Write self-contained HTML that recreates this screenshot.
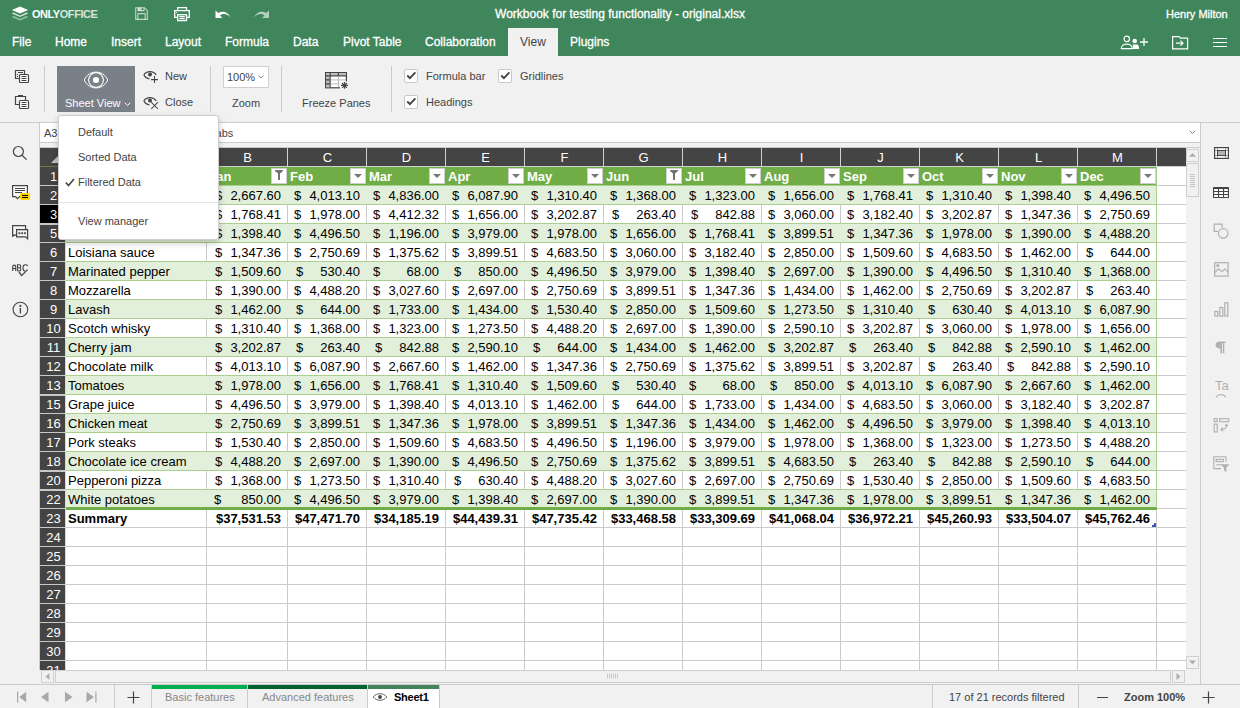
<!DOCTYPE html><html><head><meta charset="utf-8"><style>
*{box-sizing:border-box;margin:0;padding:0}
html,body{width:1240px;height:708px;overflow:hidden;background:#f1f1f1;font-family:"Liberation Sans", sans-serif;position:relative}
div,span{position:absolute;white-space:nowrap}
svg{position:absolute;overflow:visible}
.t{font-size:12px;color:#fff;top:35px;line-height:14px;-webkit-text-stroke:0.3px currentColor}
.hb{-webkit-text-stroke:0.3px currentColor}
.l{font-size:11px;color:#444444;line-height:13px}
.c{font-size:13px;color:#000;line-height:15px}
.r{text-align:right}

</style></head><body>
<div style="left:0;top:0;width:1240px;height:56px;background:#40865c"></div>
<svg style="left:11px;top:6px" width="18" height="15" viewBox="0 0 18 15">
<path d="M9 0.5 L17.2 4 L9 7.5 L0.8 4 Z" fill="#fff"/>
<path d="M2.5 6.6 L0.8 7.5 L9 11 L17.2 7.5 L15.5 6.6 L9 9.4 Z" fill="#fff" opacity="0.75"/>
<path d="M2.5 10.1 L0.8 11 L9 14.5 L17.2 11 L15.5 10.1 L9 12.9 Z" fill="#fff" opacity="0.5"/>
</svg>
<div style="left:32px;top:8px;font-size:11px;font-weight:bold;color:#fff;line-height:13px;letter-spacing:-0.45px">ONLY<span style="position:static;color:rgba(255,255,255,0.8)">OFFICE</span></div>
<svg style="left:130px;top:4px" width="20" height="18" viewBox="0 0 20 18" fill="none" stroke="#fff" stroke-opacity="0.65" stroke-width="1.1">
<path d="M5.7 3.7 H14.4 L17.3 6.6 V15.4 H5.7 Z"/><rect x="8" y="3.7" width="3.6" height="2.9" fill="#fff" fill-opacity="0.65" stroke="none"/><path d="M8 3.7 V6.6 H14 V3.7"/><path d="M7.9 15.4 V9.6 H15.1 V15.4"/></svg>
<svg style="left:130px;top:4px" width="64" height="20" viewBox="0 0 64 20" fill="none" stroke="#fff" stroke-width="1.3">
<path d="M47.7 6.3 V3.7 H56.5 V6.3"/><path d="M47.3 13.4 H44.7 V6.7 H59.3 V13.4 H56.8"/><rect x="47.7" y="10.7" width="8.8" height="5.9"/><path d="M49.4 12.6 H54.8 M49.4 14.6 H54.8"/><circle cx="46.6" cy="8.6" r="0.6" fill="#fff" stroke="none"/></svg>
<svg style="left:215px;top:9px" width="17" height="11" viewBox="0 0 17 11">
<path d="M0.5 1.5 L0.5 9 L7.5 9 L5 6.6 C7.5 4.5 11.5 4.2 15.5 8.5 C13 2.5 7 1.5 3.3 4 Z" fill="#fff"/></svg>
<svg style="left:253px;top:9px" width="17" height="11" viewBox="0 0 17 11">
<path d="M16 1.5 L16 9 L9 9 L11.5 6.6 C9 4.5 5 4.2 1 8.5 C3.5 2.5 9.5 1.5 13.2 4 Z" fill="#fff" opacity="0.6"/></svg>
<div class="hb" style="left:0;top:7px;width:1240px;text-align:center;font-size:12px;color:#fff;line-height:14px">Workbook for testing functionality - original.xlsx</div>
<div class="hb" style="left:1166px;top:8px;font-size:11px;color:#fff;line-height:13px">Henry Milton</div>
<div style="left:508px;top:28px;width:50px;height:28px;background:#f1f1f1"></div>
<div class="t" style="left:12px;color:#fff">File</div>
<div class="t" style="left:55px;color:#fff">Home</div>
<div class="t" style="left:111px;color:#fff">Insert</div>
<div class="t" style="left:165px;color:#fff">Layout</div>
<div class="t" style="left:225px;color:#fff">Formula</div>
<div class="t" style="left:293px;color:#fff">Data</div>
<div class="t" style="left:343px;color:#fff">Pivot Table</div>
<div class="t" style="left:425px;color:#fff">Collaboration</div>
<div class="t" style="left:520px;color:#444444;-webkit-text-stroke:0">View</div>
<div class="t" style="left:570px;color:#fff">Plugins</div>
<svg style="left:1120px;top:35px" width="30" height="15" viewBox="0 0 30 15" fill="none" stroke="#fff" stroke-width="1.2">
<circle cx="6.8" cy="3.9" r="2.7"/><path d="M1.3 13.6 C1.3 7.6 12.3 7.6 12.3 13.6 Z"/>
<circle cx="14.7" cy="6" r="2.3" fill="#fff" stroke="none"/><path d="M12.9 9.4 H16.5 C18.3 9.4 19.1 10.8 19.1 13.9 H12.9 Z" fill="#fff" stroke="none"/>
<path d="M20 7 H28 M24 3 V11" stroke-width="1.3"/></svg>
<svg style="left:1172px;top:36px" width="17" height="14" viewBox="0 0 17 14" fill="none" stroke="#fff" stroke-width="1.2">
<path d="M0.6 0.6 H7 L8.5 2.2 H15.6 V12.8 H0.6 Z"/><path d="M4 7.2 H11 M8.5 4.7 L11 7.2 L8.5 9.7"/></svg>
<svg style="left:1213px;top:37px" width="14" height="11" viewBox="0 0 14 11" stroke="#fff" stroke-width="1.2">
<path d="M0 1.5 H14 M0 5.5 H14 M0 9.5 H14"/></svg>
<div style="left:0;top:122px;width:1240px;height:1px;background:#cbcbcb"></div>
<div style="left:44px;top:66px;width:1px;height:46px;background:#cbcbcb"></div>
<div style="left:210px;top:66px;width:1px;height:46px;background:#cbcbcb"></div>
<div style="left:281px;top:66px;width:1px;height:46px;background:#cbcbcb"></div>
<div style="left:391px;top:66px;width:1px;height:46px;background:#cbcbcb"></div>
<svg style="left:14px;top:69px" width="16" height="15" viewBox="0 0 16 15" fill="none" stroke="#444" stroke-width="1.2">
<path d="M5 9.5 H1.5 V1.5 H10.5 V5"/><path d="M4 3.5 H9" stroke-width="1"/><rect x="3" y="5" width="1" height="1" fill="#444" stroke="none"/><rect x="3" y="7" width="1" height="1" fill="#444" stroke="none"/>
<rect x="5.5" y="5.5" width="9" height="8" rx="0.9" fill="#fff"/><path d="M7.5 7.5 H12.5 M7.5 9.5 H12.5 M7.5 11.5 H12.5" stroke-width="1"/></svg>
<svg style="left:14px;top:94px" width="16" height="16" viewBox="0 0 16 16" fill="none" stroke="#444" stroke-width="1.2">
<path d="M5 10.5 H1.5 V2.5 H11.5 V6"/><path d="M4 2 H9" stroke-width="2"/>
<rect x="5.5" y="6.5" width="9" height="8" rx="0.9" fill="#fff"/><path d="M7.5 8.5 H12.5 M7.5 10.5 H12.5 M7.5 12.5 H12.5" stroke-width="1"/></svg>
<div style="left:57px;top:66px;width:78px;height:46px;background:#7a8088"></div>
<svg style="left:83px;top:71px" width="26" height="18" viewBox="0 0 26 18" fill="none" stroke="#fff" stroke-width="1">
<path d="M1.2 9 C6 -1.6 20 -1.6 24.8 9 C20 19.6 6 19.6 1.2 9 Z"/><circle cx="13" cy="9" r="7.4" stroke-width="1.1"/><circle cx="13" cy="9" r="3.1" fill="#fff" stroke="none"/></svg>
<div class="l" style="left:65px;top:97px;color:#fff">Sheet View</div>
<svg style="left:124px;top:102px" width="7" height="5" viewBox="0 0 7 5" fill="none" stroke="#fff" stroke-width="1"><path d="M0.8 0.8 L3.5 3.5 L6.2 0.8"/></svg>
<svg style="left:143px;top:70px" width="16" height="14" viewBox="0 0 16 14" fill="none" stroke="#444" stroke-width="1.2">
<path d="M0.8 5 C3.5 0.5 10.5 0.5 13.2 5 M0.8 5 C2 7 4 8.6 6.5 9"/><circle cx="7" cy="4.6" r="2" fill="#444" stroke="none"/>
<path d="M8 9.6 H15 M11.5 6.1 V13.1" stroke-width="1.05"/></svg>
<div class="l" style="left:165px;top:70px">New</div>
<svg style="left:143px;top:96px" width="16" height="14" viewBox="0 0 16 14" fill="none" stroke="#444" stroke-width="1.2">
<path d="M0.8 5 C3.5 0.5 10.5 0.5 13.2 5 M0.8 5 C2 7 4 8.6 6.5 9"/><circle cx="7" cy="4.6" r="2" fill="#444" stroke="none"/>
<path d="M8.2 6.2 L15 13 M15 6.2 L8.2 13" stroke-width="1.05"/></svg>
<div class="l" style="left:165px;top:96px">Close</div>
<div style="left:223px;top:66px;width:46px;height:22px;background:#fff;border:1px solid #cfcfcf;border-radius:1px"></div>
<div class="l" style="left:227px;top:71px">100%</div>
<svg style="left:258px;top:75px" width="6" height="4" viewBox="0 0 6 4" fill="none" stroke="#777" stroke-width="0.9"><path d="M0.5 0.7 L3 3 L5.5 0.7"/></svg>
<div class="l" style="left:232px;top:97px">Zoom</div>
<svg style="left:325px;top:72px" width="24" height="18" viewBox="0 0 24 18">
<rect x="0.6" y="0.6" width="20.8" height="15.2" fill="#fff" stroke="#444" stroke-width="1.2"/>
<rect x="1.2" y="1.2" width="19.6" height="2.4" fill="#bbb"/><rect x="1.2" y="3.6" width="3.8" height="11.6" fill="#bbb"/>
<path d="M0.6 3.9 H21.4 M0.6 7.9 H5.4 M0.6 11.9 H5.4 M5.2 0.6 V15.8 M13.4 0.6 V3.9" stroke="#444" stroke-width="1.1"/>
<path d="M5.4 7.9 H21 M5.4 11.9 H14 M13.4 3.9 V15" stroke="#aaa" stroke-width="0.8"/>
<rect x="15" y="9.4" width="9" height="8" fill="#f1f1f1"/>
<path d="M19.5 10 V16.8 M16.1 13.4 H22.9 M17.1 11 L21.9 15.8 M21.9 11 L17.1 15.8" stroke="#444" stroke-width="1.1"/><circle cx="19.5" cy="13.4" r="1.7" fill="#444"/>
</svg>
<div class="l" style="left:302px;top:97px">Freeze Panes</div>
<div style="left:404px;top:69px;width:14px;height:14px;background:#fff;border:1px solid #c8c8c8;border-radius:2px"></div><svg style="left:404px;top:69px" width="14" height="14" viewBox="0 0 14 14" fill="none" stroke="#444" stroke-width="1.9"><path d="M3.3 6.5 L5.9 9.1 L11.4 3.3"/></svg>
<div class="l" style="left:426px;top:70px">Formula bar</div>
<div style="left:498px;top:69px;width:14px;height:14px;background:#fff;border:1px solid #c8c8c8;border-radius:2px"></div><svg style="left:498px;top:69px" width="14" height="14" viewBox="0 0 14 14" fill="none" stroke="#444" stroke-width="1.9"><path d="M3.3 6.5 L5.9 9.1 L11.4 3.3"/></svg>
<div class="l" style="left:520px;top:70px">Gridlines</div>
<div style="left:404px;top:95px;width:14px;height:14px;background:#fff;border:1px solid #c8c8c8;border-radius:2px"></div><svg style="left:404px;top:95px" width="14" height="14" viewBox="0 0 14 14" fill="none" stroke="#444" stroke-width="1.9"><path d="M3.3 6.5 L5.9 9.1 L11.4 3.3"/></svg>
<div class="l" style="left:426px;top:96px">Headings</div>
<div style="left:39px;top:123px;width:1px;height:547px;background:#cbcbcb"></div>
<div style="left:40px;top:123px;width:1160px;height:19px;background:#fff"></div>
<div style="left:40px;top:142px;width:1160px;height:1px;background:#cbcbcb"></div>
<div class="l" style="left:44px;top:127px">A3</div>
<div class="l" style="left:196px;top:127px">Kebabs</div>
<svg style="left:1189px;top:130px" width="7" height="5" viewBox="0 0 7 5" fill="none" stroke="#777" stroke-width="0.9"><path d="M0.8 0.8 L3.5 3.5 L6.2 0.8"/></svg>
<div style="left:40px;top:147px;width:1160px;height:1px;background:#cbcbcb"></div>
<svg style="left:12px;top:145px" width="16" height="16" viewBox="0 0 16 16" fill="none" stroke="#444" stroke-width="1.2">
<circle cx="6.4" cy="6.5" r="5"/><path d="M10 10.2 L14.6 14.6"/></svg>
<svg style="left:12px;top:185px" width="19" height="16" viewBox="0 0 19 16" fill="none" stroke="#444" stroke-width="1.2">
<path d="M0.6 0.6 H15.4 V11.6 H7.5 L5.5 13.6 L3.5 11.6 H0.6 Z" fill="#fff"/><path d="M3 3.5 H13 M3 5.5 H13 M3 7.5 H10" stroke-width="1"/>
<rect x="8" y="8" width="10" height="7" rx="1.6" fill="#ffd400" stroke="none"/><path d="M10 10.5 H16 M10 12.5 H16" stroke="#000" stroke-width="1.1"/></svg>
<svg style="left:12px;top:225px" width="17" height="15" viewBox="0 0 17 15" fill="none" stroke="#444" stroke-width="1.2">
<path d="M4 10.2 H0.6 V0.6 H13.6 V4"/><path d="M0.6 10.2 V11.2 L2.6 10"/>
<path d="M4.6 4.6 H15.6 V13.8 L13.6 11.9 H4.6 Z"/><rect x="6.5" y="7.3" width="1.8" height="1.8" fill="#444" stroke="none"/><rect x="9.3" y="7.3" width="1.8" height="1.8" fill="#444" stroke="none"/><rect x="12.1" y="7.3" width="1.8" height="1.8" fill="#444" stroke="none"/></svg>
<svg style="left:12px;top:264px" width="17" height="15" viewBox="0 0 17 15" fill="none" stroke="#444" stroke-width="1.1">
<path d="M0.7 7 V2.5 C0.7 0.6 3.7 0.6 3.7 2.5 V7 M0.7 4.5 H3.7"/>
<path d="M5.5 7 V0.8 H7.4 C9 0.8 9 3.7 7.4 3.7 H5.5 M7.4 3.7 C9.3 3.7 9.3 7 7.4 7 H5.5"/>
<path d="M15.8 1.8 C15 0.8 14 0.8 13 0.8 C11 0.8 11 2.5 11 4 C11 5.5 11 7 13 7"/>
<path d="M7 8 L9.6 11.6 L15.6 5.6" stroke-width="1.3"/></svg>
<svg style="left:12px;top:301px" width="17" height="17" viewBox="0 0 17 17" fill="none" stroke="#444" stroke-width="1.1">
<circle cx="8.4" cy="8.5" r="7.3"/><path d="M8.4 7 V12.5" stroke-width="1.3"/><circle cx="8.4" cy="4.9" r="0.5" fill="#444"/></svg>
<div style="left:1200px;top:123px;width:1px;height:562px;background:#cbcbcb"></div>
<svg style="left:1214px;top:147px" width="15" height="12" viewBox="0 0 15 12" fill="none">
<rect x="0.6" y="0.6" width="13.8" height="10.8" fill="#fff" stroke="#444" stroke-width="1.2"/>
<path d="M3.5 1 V3.5 M11.5 1 V3.5 M3.5 8.5 V11 M11.5 8.5 V11 M1 3.5 H3.5 M11.5 3.5 H14 M1 8.5 H3.5 M11.5 8.5 H14" stroke="#9a9a9a" stroke-width="1"/>
<rect x="3.5" y="3.5" width="8" height="5" fill="#b4b4b4" stroke="#444" stroke-width="1"/></svg>
<svg style="left:1213px;top:187px" width="16" height="11" viewBox="0 0 16 11">
<rect x="0" y="0" width="16" height="11" rx="0.5" fill="#444"/>
<g fill="#fff"><rect x="1" y="2" width="4" height="2" rx="0.6"/><rect x="6" y="2" width="4" height="2" rx="0.6"/><rect x="11" y="2" width="4" height="2" rx="0.6"/>
<rect x="1" y="5" width="4" height="2" rx="0.6"/><rect x="6" y="5" width="4" height="2" rx="0.6"/><rect x="11" y="5" width="4" height="2" rx="0.6"/>
<rect x="1" y="8" width="4" height="2" rx="0.6"/><rect x="6" y="8" width="4" height="2" rx="0.6"/><rect x="11" y="8" width="4" height="2" rx="0.6"/></g></svg>
<svg style="left:1213px;top:223px" width="17" height="17" viewBox="0 0 17 17" fill="none" stroke="#b0b0b0" stroke-width="1.2">
<path d="M5 8.4 H1.2 V1.2 H9 V4.5"/><circle cx="10.2" cy="10.4" r="4.7"/></svg>
<svg style="left:1214px;top:262px" width="15" height="15" viewBox="0 0 15 15" fill="none" stroke="#b0b0b0" stroke-width="1.2">
<rect x="0.7" y="0.7" width="13.4" height="13.4"/><circle cx="3.8" cy="3.6" r="1"/><path d="M0.7 10.5 L4.7 6.8 L8 9.6 L10.8 7 L14.1 10"/></svg>
<svg style="left:1214px;top:302px" width="15" height="15" viewBox="0 0 15 15" fill="none" stroke="#b0b0b0" stroke-width="1.2">
<rect x="0.8" y="9.5" width="3" height="4.6"/><rect x="5.8" y="5.5" width="3" height="8.6"/><rect x="10.8" y="0.8" width="3" height="13.3"/></svg>
<svg style="left:1215px;top:341px" width="11" height="13" viewBox="0 0 11 13"><path d="M4.5 0.5 H10.5 V2 H9.3 V12.5 H7.8 V2 H6.9 V12.5 H5.4 V7.6 H4.5 C2.3 7.6 0.6 6.1 0.6 4 C0.6 1.9 2.3 0.5 4.5 0.5 Z" fill="#b0b0b0"/></svg>
<div style="left:1215px;top:379px;font-size:13px;color:#b0b0b0;line-height:14px">Ta</div><svg style="left:1215px;top:393px" width="13" height="5" viewBox="0 0 13 5" fill="none" stroke="#b0b0b0" stroke-width="1.1"><path d="M1 4.2 C3.5 0.5 8.5 0.5 11 4.2"/></svg>
<svg style="left:1213px;top:418px" width="17" height="15" viewBox="0 0 17 15" fill="none" stroke="#b0b0b0" stroke-width="1.1">
<rect x="1.2" y="0.7" width="3" height="3"/><rect x="6.8" y="0.7" width="9" height="3"/><rect x="1.2" y="6.2" width="3" height="7.8"/>
<path d="M13.5 6.5 C13.5 10 12 11.5 8 11.5 M9.8 9.7 L8 11.5 L9.8 13.3 M12 8 L13.5 6.3 L15 8"/></svg>
<svg style="left:1213px;top:456px" width="17" height="17" viewBox="0 0 17 17" fill="none" stroke="#b0b0b0" stroke-width="1.1">
<path d="M8 12.6 H0.8 V0.8 H13 V6"/><rect x="3.2" y="3.4" width="7.2" height="2.2"/><path d="M3.2 8.8 H8.5"/>
<path d="M7.5 8.3 H16.5 L13.3 11.8 V16 L11 14.6 V11.8 Z" fill="#b0b0b0" stroke="none"/></svg>
<div style="left:40px;top:148px;width:1146px;height:522px;background:#fff"></div>
<div style="left:40px;top:148px;width:1146px;height:18px;background:#444444"></div>
<svg style="left:40px;top:148px" width="25" height="18" viewBox="0 0 25 18"><path d="M25 1 L25 15 L11 15 Z" fill="#c4c4c4"/></svg>
<div class="c" style="left:66px;top:150px;width:141px;text-align:center;color:#fff">A</div>
<div class="c" style="left:207px;top:150px;width:81px;text-align:center;color:#fff">B</div>
<div class="c" style="left:288px;top:150px;width:79px;text-align:center;color:#fff">C</div>
<div class="c" style="left:367px;top:150px;width:79px;text-align:center;color:#fff">D</div>
<div class="c" style="left:446px;top:150px;width:79px;text-align:center;color:#fff">E</div>
<div class="c" style="left:525px;top:150px;width:79px;text-align:center;color:#fff">F</div>
<div class="c" style="left:604px;top:150px;width:79px;text-align:center;color:#fff">G</div>
<div class="c" style="left:683px;top:150px;width:79px;text-align:center;color:#fff">H</div>
<div class="c" style="left:762px;top:150px;width:79px;text-align:center;color:#fff">I</div>
<div class="c" style="left:841px;top:150px;width:79px;text-align:center;color:#fff">J</div>
<div class="c" style="left:920px;top:150px;width:79px;text-align:center;color:#fff">K</div>
<div class="c" style="left:999px;top:150px;width:79px;text-align:center;color:#fff">L</div>
<div class="c" style="left:1078px;top:150px;width:79px;text-align:center;color:#fff">M</div>
<div style="left:65px;top:148px;width:1px;height:18px;background:#d0d0d0"></div>
<div style="left:206px;top:148px;width:1px;height:18px;background:#d0d0d0"></div>
<div style="left:287px;top:148px;width:1px;height:18px;background:#d0d0d0"></div>
<div style="left:366px;top:148px;width:1px;height:18px;background:#d0d0d0"></div>
<div style="left:445px;top:148px;width:1px;height:18px;background:#d0d0d0"></div>
<div style="left:524px;top:148px;width:1px;height:18px;background:#d0d0d0"></div>
<div style="left:603px;top:148px;width:1px;height:18px;background:#d0d0d0"></div>
<div style="left:682px;top:148px;width:1px;height:18px;background:#d0d0d0"></div>
<div style="left:761px;top:148px;width:1px;height:18px;background:#d0d0d0"></div>
<div style="left:840px;top:148px;width:1px;height:18px;background:#d0d0d0"></div>
<div style="left:919px;top:148px;width:1px;height:18px;background:#d0d0d0"></div>
<div style="left:998px;top:148px;width:1px;height:18px;background:#d0d0d0"></div>
<div style="left:1077px;top:148px;width:1px;height:18px;background:#d0d0d0"></div>
<div style="left:1156px;top:148px;width:1px;height:18px;background:#d0d0d0"></div>
<div style="left:40px;top:166px;width:1146px;height:1px;background:#9a9a9a"></div>
<div style="left:40px;top:166px;width:25px;height:504px;background:#444444"></div>
<div style="left:40px;top:166px;width:25px;height:1px;background:#6b7c45"></div>
<div style="left:65px;top:166px;width:1121px;height:1px;background:#d0d0d0"></div>
<div class="c" style="left:41px;top:169px;width:25px;text-align:center;color:#fff">1</div>
<div style="left:40px;top:185px;width:25px;height:1px;background:#c8c8c8"></div>
<div class="c" style="left:41px;top:188px;width:25px;text-align:center;color:#fff">2</div>
<div style="left:40px;top:204px;width:25px;height:1px;background:#c8c8c8"></div>
<div style="left:40px;top:205px;width:25px;height:18px;background:#000"></div>
<div class="c" style="left:41px;top:207px;width:25px;text-align:center;color:#fff">3</div>
<div style="left:40px;top:223px;width:25px;height:2px;background:#c8c8c8"></div>
<div class="c" style="left:41px;top:226px;width:25px;text-align:center;color:#fff">5</div>
<div style="left:40px;top:242px;width:25px;height:1px;background:#c8c8c8"></div>
<div class="c" style="left:41px;top:245px;width:25px;text-align:center;color:#fff">6</div>
<div style="left:40px;top:261px;width:25px;height:1px;background:#c8c8c8"></div>
<div class="c" style="left:41px;top:264px;width:25px;text-align:center;color:#fff">7</div>
<div style="left:40px;top:280px;width:25px;height:1px;background:#c8c8c8"></div>
<div class="c" style="left:41px;top:283px;width:25px;text-align:center;color:#fff">8</div>
<div style="left:40px;top:299px;width:25px;height:1px;background:#c8c8c8"></div>
<div class="c" style="left:41px;top:302px;width:25px;text-align:center;color:#fff">9</div>
<div style="left:40px;top:318px;width:25px;height:1px;background:#c8c8c8"></div>
<div class="c" style="left:41px;top:321px;width:25px;text-align:center;color:#fff">10</div>
<div style="left:40px;top:337px;width:25px;height:1px;background:#c8c8c8"></div>
<div class="c" style="left:41px;top:340px;width:25px;text-align:center;color:#fff">11</div>
<div style="left:40px;top:356px;width:25px;height:1px;background:#c8c8c8"></div>
<div class="c" style="left:41px;top:359px;width:25px;text-align:center;color:#fff">12</div>
<div style="left:40px;top:375px;width:25px;height:1px;background:#c8c8c8"></div>
<div class="c" style="left:41px;top:378px;width:25px;text-align:center;color:#fff">13</div>
<div style="left:40px;top:394px;width:25px;height:2px;background:#c8c8c8"></div>
<div class="c" style="left:41px;top:397px;width:25px;text-align:center;color:#fff">15</div>
<div style="left:40px;top:413px;width:25px;height:1px;background:#c8c8c8"></div>
<div class="c" style="left:41px;top:416px;width:25px;text-align:center;color:#fff">16</div>
<div style="left:40px;top:432px;width:25px;height:1px;background:#c8c8c8"></div>
<div class="c" style="left:41px;top:435px;width:25px;text-align:center;color:#fff">17</div>
<div style="left:40px;top:451px;width:25px;height:1px;background:#c8c8c8"></div>
<div class="c" style="left:41px;top:454px;width:25px;text-align:center;color:#fff">18</div>
<div style="left:40px;top:470px;width:25px;height:2px;background:#c8c8c8"></div>
<div class="c" style="left:41px;top:473px;width:25px;text-align:center;color:#fff">20</div>
<div style="left:40px;top:489px;width:25px;height:2px;background:#c8c8c8"></div>
<div class="c" style="left:41px;top:492px;width:25px;text-align:center;color:#fff">22</div>
<div style="left:40px;top:508px;width:25px;height:1px;background:#c8c8c8"></div>
<div class="c" style="left:41px;top:511px;width:25px;text-align:center;color:#fff">23</div>
<div style="left:40px;top:527px;width:25px;height:1px;background:#c8c8c8"></div>
<div class="c" style="left:41px;top:530px;width:25px;text-align:center;color:#fff">24</div>
<div style="left:40px;top:546px;width:25px;height:1px;background:#c8c8c8"></div>
<div class="c" style="left:41px;top:549px;width:25px;text-align:center;color:#fff">25</div>
<div style="left:40px;top:565px;width:25px;height:1px;background:#c8c8c8"></div>
<div class="c" style="left:41px;top:568px;width:25px;text-align:center;color:#fff">26</div>
<div style="left:40px;top:584px;width:25px;height:1px;background:#c8c8c8"></div>
<div class="c" style="left:41px;top:587px;width:25px;text-align:center;color:#fff">27</div>
<div style="left:40px;top:603px;width:25px;height:1px;background:#c8c8c8"></div>
<div class="c" style="left:41px;top:606px;width:25px;text-align:center;color:#fff">28</div>
<div style="left:40px;top:622px;width:25px;height:1px;background:#c8c8c8"></div>
<div class="c" style="left:41px;top:625px;width:25px;text-align:center;color:#fff">29</div>
<div style="left:40px;top:641px;width:25px;height:1px;background:#c8c8c8"></div>
<div class="c" style="left:41px;top:644px;width:25px;text-align:center;color:#fff">30</div>
<div style="left:40px;top:660px;width:25px;height:1px;background:#c8c8c8"></div>
<div class="c" style="left:41px;top:663px;width:25px;text-align:center;color:#fff">31</div>
<div style="left:40px;top:679px;width:25px;height:1px;background:#c8c8c8"></div>
<div style="left:66px;top:167px;width:1090px;height:18px;background:#70ad47"></div>
<div style="left:66px;top:186px;width:1090px;height:18px;background:#e2efda"></div>
<div style="left:66px;top:224px;width:1090px;height:18px;background:#e2efda"></div>
<div style="left:66px;top:262px;width:1090px;height:18px;background:#e2efda"></div>
<div style="left:66px;top:300px;width:1090px;height:18px;background:#e2efda"></div>
<div style="left:66px;top:338px;width:1090px;height:18px;background:#e2efda"></div>
<div style="left:66px;top:376px;width:1090px;height:18px;background:#e2efda"></div>
<div style="left:66px;top:414px;width:1090px;height:18px;background:#e2efda"></div>
<div style="left:66px;top:452px;width:1090px;height:18px;background:#e2efda"></div>
<div style="left:66px;top:490px;width:1090px;height:18px;background:#e2efda"></div>
<div style="left:65px;top:204px;width:1px;height:20px;background:#cacaca"></div>
<div style="left:206px;top:204px;width:1px;height:20px;background:#cacaca"></div>
<div style="left:287px;top:204px;width:1px;height:20px;background:#cacaca"></div>
<div style="left:366px;top:204px;width:1px;height:20px;background:#cacaca"></div>
<div style="left:445px;top:204px;width:1px;height:20px;background:#cacaca"></div>
<div style="left:524px;top:204px;width:1px;height:20px;background:#cacaca"></div>
<div style="left:603px;top:204px;width:1px;height:20px;background:#cacaca"></div>
<div style="left:682px;top:204px;width:1px;height:20px;background:#cacaca"></div>
<div style="left:761px;top:204px;width:1px;height:20px;background:#cacaca"></div>
<div style="left:840px;top:204px;width:1px;height:20px;background:#cacaca"></div>
<div style="left:919px;top:204px;width:1px;height:20px;background:#cacaca"></div>
<div style="left:998px;top:204px;width:1px;height:20px;background:#cacaca"></div>
<div style="left:1077px;top:204px;width:1px;height:20px;background:#cacaca"></div>
<div style="left:1156px;top:204px;width:1px;height:20px;background:#cacaca"></div>
<div style="left:65px;top:242px;width:1px;height:20px;background:#cacaca"></div>
<div style="left:206px;top:242px;width:1px;height:20px;background:#cacaca"></div>
<div style="left:287px;top:242px;width:1px;height:20px;background:#cacaca"></div>
<div style="left:366px;top:242px;width:1px;height:20px;background:#cacaca"></div>
<div style="left:445px;top:242px;width:1px;height:20px;background:#cacaca"></div>
<div style="left:524px;top:242px;width:1px;height:20px;background:#cacaca"></div>
<div style="left:603px;top:242px;width:1px;height:20px;background:#cacaca"></div>
<div style="left:682px;top:242px;width:1px;height:20px;background:#cacaca"></div>
<div style="left:761px;top:242px;width:1px;height:20px;background:#cacaca"></div>
<div style="left:840px;top:242px;width:1px;height:20px;background:#cacaca"></div>
<div style="left:919px;top:242px;width:1px;height:20px;background:#cacaca"></div>
<div style="left:998px;top:242px;width:1px;height:20px;background:#cacaca"></div>
<div style="left:1077px;top:242px;width:1px;height:20px;background:#cacaca"></div>
<div style="left:1156px;top:242px;width:1px;height:20px;background:#cacaca"></div>
<div style="left:65px;top:280px;width:1px;height:20px;background:#cacaca"></div>
<div style="left:206px;top:280px;width:1px;height:20px;background:#cacaca"></div>
<div style="left:287px;top:280px;width:1px;height:20px;background:#cacaca"></div>
<div style="left:366px;top:280px;width:1px;height:20px;background:#cacaca"></div>
<div style="left:445px;top:280px;width:1px;height:20px;background:#cacaca"></div>
<div style="left:524px;top:280px;width:1px;height:20px;background:#cacaca"></div>
<div style="left:603px;top:280px;width:1px;height:20px;background:#cacaca"></div>
<div style="left:682px;top:280px;width:1px;height:20px;background:#cacaca"></div>
<div style="left:761px;top:280px;width:1px;height:20px;background:#cacaca"></div>
<div style="left:840px;top:280px;width:1px;height:20px;background:#cacaca"></div>
<div style="left:919px;top:280px;width:1px;height:20px;background:#cacaca"></div>
<div style="left:998px;top:280px;width:1px;height:20px;background:#cacaca"></div>
<div style="left:1077px;top:280px;width:1px;height:20px;background:#cacaca"></div>
<div style="left:1156px;top:280px;width:1px;height:20px;background:#cacaca"></div>
<div style="left:65px;top:318px;width:1px;height:20px;background:#cacaca"></div>
<div style="left:206px;top:318px;width:1px;height:20px;background:#cacaca"></div>
<div style="left:287px;top:318px;width:1px;height:20px;background:#cacaca"></div>
<div style="left:366px;top:318px;width:1px;height:20px;background:#cacaca"></div>
<div style="left:445px;top:318px;width:1px;height:20px;background:#cacaca"></div>
<div style="left:524px;top:318px;width:1px;height:20px;background:#cacaca"></div>
<div style="left:603px;top:318px;width:1px;height:20px;background:#cacaca"></div>
<div style="left:682px;top:318px;width:1px;height:20px;background:#cacaca"></div>
<div style="left:761px;top:318px;width:1px;height:20px;background:#cacaca"></div>
<div style="left:840px;top:318px;width:1px;height:20px;background:#cacaca"></div>
<div style="left:919px;top:318px;width:1px;height:20px;background:#cacaca"></div>
<div style="left:998px;top:318px;width:1px;height:20px;background:#cacaca"></div>
<div style="left:1077px;top:318px;width:1px;height:20px;background:#cacaca"></div>
<div style="left:1156px;top:318px;width:1px;height:20px;background:#cacaca"></div>
<div style="left:65px;top:356px;width:1px;height:20px;background:#cacaca"></div>
<div style="left:206px;top:356px;width:1px;height:20px;background:#cacaca"></div>
<div style="left:287px;top:356px;width:1px;height:20px;background:#cacaca"></div>
<div style="left:366px;top:356px;width:1px;height:20px;background:#cacaca"></div>
<div style="left:445px;top:356px;width:1px;height:20px;background:#cacaca"></div>
<div style="left:524px;top:356px;width:1px;height:20px;background:#cacaca"></div>
<div style="left:603px;top:356px;width:1px;height:20px;background:#cacaca"></div>
<div style="left:682px;top:356px;width:1px;height:20px;background:#cacaca"></div>
<div style="left:761px;top:356px;width:1px;height:20px;background:#cacaca"></div>
<div style="left:840px;top:356px;width:1px;height:20px;background:#cacaca"></div>
<div style="left:919px;top:356px;width:1px;height:20px;background:#cacaca"></div>
<div style="left:998px;top:356px;width:1px;height:20px;background:#cacaca"></div>
<div style="left:1077px;top:356px;width:1px;height:20px;background:#cacaca"></div>
<div style="left:1156px;top:356px;width:1px;height:20px;background:#cacaca"></div>
<div style="left:65px;top:394px;width:1px;height:20px;background:#cacaca"></div>
<div style="left:206px;top:394px;width:1px;height:20px;background:#cacaca"></div>
<div style="left:287px;top:394px;width:1px;height:20px;background:#cacaca"></div>
<div style="left:366px;top:394px;width:1px;height:20px;background:#cacaca"></div>
<div style="left:445px;top:394px;width:1px;height:20px;background:#cacaca"></div>
<div style="left:524px;top:394px;width:1px;height:20px;background:#cacaca"></div>
<div style="left:603px;top:394px;width:1px;height:20px;background:#cacaca"></div>
<div style="left:682px;top:394px;width:1px;height:20px;background:#cacaca"></div>
<div style="left:761px;top:394px;width:1px;height:20px;background:#cacaca"></div>
<div style="left:840px;top:394px;width:1px;height:20px;background:#cacaca"></div>
<div style="left:919px;top:394px;width:1px;height:20px;background:#cacaca"></div>
<div style="left:998px;top:394px;width:1px;height:20px;background:#cacaca"></div>
<div style="left:1077px;top:394px;width:1px;height:20px;background:#cacaca"></div>
<div style="left:1156px;top:394px;width:1px;height:20px;background:#cacaca"></div>
<div style="left:65px;top:432px;width:1px;height:20px;background:#cacaca"></div>
<div style="left:206px;top:432px;width:1px;height:20px;background:#cacaca"></div>
<div style="left:287px;top:432px;width:1px;height:20px;background:#cacaca"></div>
<div style="left:366px;top:432px;width:1px;height:20px;background:#cacaca"></div>
<div style="left:445px;top:432px;width:1px;height:20px;background:#cacaca"></div>
<div style="left:524px;top:432px;width:1px;height:20px;background:#cacaca"></div>
<div style="left:603px;top:432px;width:1px;height:20px;background:#cacaca"></div>
<div style="left:682px;top:432px;width:1px;height:20px;background:#cacaca"></div>
<div style="left:761px;top:432px;width:1px;height:20px;background:#cacaca"></div>
<div style="left:840px;top:432px;width:1px;height:20px;background:#cacaca"></div>
<div style="left:919px;top:432px;width:1px;height:20px;background:#cacaca"></div>
<div style="left:998px;top:432px;width:1px;height:20px;background:#cacaca"></div>
<div style="left:1077px;top:432px;width:1px;height:20px;background:#cacaca"></div>
<div style="left:1156px;top:432px;width:1px;height:20px;background:#cacaca"></div>
<div style="left:65px;top:470px;width:1px;height:20px;background:#cacaca"></div>
<div style="left:206px;top:470px;width:1px;height:20px;background:#cacaca"></div>
<div style="left:287px;top:470px;width:1px;height:20px;background:#cacaca"></div>
<div style="left:366px;top:470px;width:1px;height:20px;background:#cacaca"></div>
<div style="left:445px;top:470px;width:1px;height:20px;background:#cacaca"></div>
<div style="left:524px;top:470px;width:1px;height:20px;background:#cacaca"></div>
<div style="left:603px;top:470px;width:1px;height:20px;background:#cacaca"></div>
<div style="left:682px;top:470px;width:1px;height:20px;background:#cacaca"></div>
<div style="left:761px;top:470px;width:1px;height:20px;background:#cacaca"></div>
<div style="left:840px;top:470px;width:1px;height:20px;background:#cacaca"></div>
<div style="left:919px;top:470px;width:1px;height:20px;background:#cacaca"></div>
<div style="left:998px;top:470px;width:1px;height:20px;background:#cacaca"></div>
<div style="left:1077px;top:470px;width:1px;height:20px;background:#cacaca"></div>
<div style="left:1156px;top:470px;width:1px;height:20px;background:#cacaca"></div>
<div style="left:65px;top:508px;width:1px;height:20px;background:#cacaca"></div>
<div style="left:206px;top:508px;width:1px;height:20px;background:#cacaca"></div>
<div style="left:287px;top:508px;width:1px;height:20px;background:#cacaca"></div>
<div style="left:366px;top:508px;width:1px;height:20px;background:#cacaca"></div>
<div style="left:445px;top:508px;width:1px;height:20px;background:#cacaca"></div>
<div style="left:524px;top:508px;width:1px;height:20px;background:#cacaca"></div>
<div style="left:603px;top:508px;width:1px;height:20px;background:#cacaca"></div>
<div style="left:682px;top:508px;width:1px;height:20px;background:#cacaca"></div>
<div style="left:761px;top:508px;width:1px;height:20px;background:#cacaca"></div>
<div style="left:840px;top:508px;width:1px;height:20px;background:#cacaca"></div>
<div style="left:919px;top:508px;width:1px;height:20px;background:#cacaca"></div>
<div style="left:998px;top:508px;width:1px;height:20px;background:#cacaca"></div>
<div style="left:1077px;top:508px;width:1px;height:20px;background:#cacaca"></div>
<div style="left:1156px;top:508px;width:1px;height:20px;background:#cacaca"></div>
<div style="left:65px;top:527px;width:1px;height:20px;background:#cacaca"></div>
<div style="left:206px;top:527px;width:1px;height:20px;background:#cacaca"></div>
<div style="left:287px;top:527px;width:1px;height:20px;background:#cacaca"></div>
<div style="left:366px;top:527px;width:1px;height:20px;background:#cacaca"></div>
<div style="left:445px;top:527px;width:1px;height:20px;background:#cacaca"></div>
<div style="left:524px;top:527px;width:1px;height:20px;background:#cacaca"></div>
<div style="left:603px;top:527px;width:1px;height:20px;background:#cacaca"></div>
<div style="left:682px;top:527px;width:1px;height:20px;background:#cacaca"></div>
<div style="left:761px;top:527px;width:1px;height:20px;background:#cacaca"></div>
<div style="left:840px;top:527px;width:1px;height:20px;background:#cacaca"></div>
<div style="left:919px;top:527px;width:1px;height:20px;background:#cacaca"></div>
<div style="left:998px;top:527px;width:1px;height:20px;background:#cacaca"></div>
<div style="left:1077px;top:527px;width:1px;height:20px;background:#cacaca"></div>
<div style="left:1156px;top:527px;width:1px;height:20px;background:#cacaca"></div>
<div style="left:65px;top:546px;width:1px;height:20px;background:#cacaca"></div>
<div style="left:206px;top:546px;width:1px;height:20px;background:#cacaca"></div>
<div style="left:287px;top:546px;width:1px;height:20px;background:#cacaca"></div>
<div style="left:366px;top:546px;width:1px;height:20px;background:#cacaca"></div>
<div style="left:445px;top:546px;width:1px;height:20px;background:#cacaca"></div>
<div style="left:524px;top:546px;width:1px;height:20px;background:#cacaca"></div>
<div style="left:603px;top:546px;width:1px;height:20px;background:#cacaca"></div>
<div style="left:682px;top:546px;width:1px;height:20px;background:#cacaca"></div>
<div style="left:761px;top:546px;width:1px;height:20px;background:#cacaca"></div>
<div style="left:840px;top:546px;width:1px;height:20px;background:#cacaca"></div>
<div style="left:919px;top:546px;width:1px;height:20px;background:#cacaca"></div>
<div style="left:998px;top:546px;width:1px;height:20px;background:#cacaca"></div>
<div style="left:1077px;top:546px;width:1px;height:20px;background:#cacaca"></div>
<div style="left:1156px;top:546px;width:1px;height:20px;background:#cacaca"></div>
<div style="left:65px;top:565px;width:1px;height:20px;background:#cacaca"></div>
<div style="left:206px;top:565px;width:1px;height:20px;background:#cacaca"></div>
<div style="left:287px;top:565px;width:1px;height:20px;background:#cacaca"></div>
<div style="left:366px;top:565px;width:1px;height:20px;background:#cacaca"></div>
<div style="left:445px;top:565px;width:1px;height:20px;background:#cacaca"></div>
<div style="left:524px;top:565px;width:1px;height:20px;background:#cacaca"></div>
<div style="left:603px;top:565px;width:1px;height:20px;background:#cacaca"></div>
<div style="left:682px;top:565px;width:1px;height:20px;background:#cacaca"></div>
<div style="left:761px;top:565px;width:1px;height:20px;background:#cacaca"></div>
<div style="left:840px;top:565px;width:1px;height:20px;background:#cacaca"></div>
<div style="left:919px;top:565px;width:1px;height:20px;background:#cacaca"></div>
<div style="left:998px;top:565px;width:1px;height:20px;background:#cacaca"></div>
<div style="left:1077px;top:565px;width:1px;height:20px;background:#cacaca"></div>
<div style="left:1156px;top:565px;width:1px;height:20px;background:#cacaca"></div>
<div style="left:65px;top:584px;width:1px;height:20px;background:#cacaca"></div>
<div style="left:206px;top:584px;width:1px;height:20px;background:#cacaca"></div>
<div style="left:287px;top:584px;width:1px;height:20px;background:#cacaca"></div>
<div style="left:366px;top:584px;width:1px;height:20px;background:#cacaca"></div>
<div style="left:445px;top:584px;width:1px;height:20px;background:#cacaca"></div>
<div style="left:524px;top:584px;width:1px;height:20px;background:#cacaca"></div>
<div style="left:603px;top:584px;width:1px;height:20px;background:#cacaca"></div>
<div style="left:682px;top:584px;width:1px;height:20px;background:#cacaca"></div>
<div style="left:761px;top:584px;width:1px;height:20px;background:#cacaca"></div>
<div style="left:840px;top:584px;width:1px;height:20px;background:#cacaca"></div>
<div style="left:919px;top:584px;width:1px;height:20px;background:#cacaca"></div>
<div style="left:998px;top:584px;width:1px;height:20px;background:#cacaca"></div>
<div style="left:1077px;top:584px;width:1px;height:20px;background:#cacaca"></div>
<div style="left:1156px;top:584px;width:1px;height:20px;background:#cacaca"></div>
<div style="left:65px;top:603px;width:1px;height:20px;background:#cacaca"></div>
<div style="left:206px;top:603px;width:1px;height:20px;background:#cacaca"></div>
<div style="left:287px;top:603px;width:1px;height:20px;background:#cacaca"></div>
<div style="left:366px;top:603px;width:1px;height:20px;background:#cacaca"></div>
<div style="left:445px;top:603px;width:1px;height:20px;background:#cacaca"></div>
<div style="left:524px;top:603px;width:1px;height:20px;background:#cacaca"></div>
<div style="left:603px;top:603px;width:1px;height:20px;background:#cacaca"></div>
<div style="left:682px;top:603px;width:1px;height:20px;background:#cacaca"></div>
<div style="left:761px;top:603px;width:1px;height:20px;background:#cacaca"></div>
<div style="left:840px;top:603px;width:1px;height:20px;background:#cacaca"></div>
<div style="left:919px;top:603px;width:1px;height:20px;background:#cacaca"></div>
<div style="left:998px;top:603px;width:1px;height:20px;background:#cacaca"></div>
<div style="left:1077px;top:603px;width:1px;height:20px;background:#cacaca"></div>
<div style="left:1156px;top:603px;width:1px;height:20px;background:#cacaca"></div>
<div style="left:65px;top:622px;width:1px;height:20px;background:#cacaca"></div>
<div style="left:206px;top:622px;width:1px;height:20px;background:#cacaca"></div>
<div style="left:287px;top:622px;width:1px;height:20px;background:#cacaca"></div>
<div style="left:366px;top:622px;width:1px;height:20px;background:#cacaca"></div>
<div style="left:445px;top:622px;width:1px;height:20px;background:#cacaca"></div>
<div style="left:524px;top:622px;width:1px;height:20px;background:#cacaca"></div>
<div style="left:603px;top:622px;width:1px;height:20px;background:#cacaca"></div>
<div style="left:682px;top:622px;width:1px;height:20px;background:#cacaca"></div>
<div style="left:761px;top:622px;width:1px;height:20px;background:#cacaca"></div>
<div style="left:840px;top:622px;width:1px;height:20px;background:#cacaca"></div>
<div style="left:919px;top:622px;width:1px;height:20px;background:#cacaca"></div>
<div style="left:998px;top:622px;width:1px;height:20px;background:#cacaca"></div>
<div style="left:1077px;top:622px;width:1px;height:20px;background:#cacaca"></div>
<div style="left:1156px;top:622px;width:1px;height:20px;background:#cacaca"></div>
<div style="left:65px;top:641px;width:1px;height:20px;background:#cacaca"></div>
<div style="left:206px;top:641px;width:1px;height:20px;background:#cacaca"></div>
<div style="left:287px;top:641px;width:1px;height:20px;background:#cacaca"></div>
<div style="left:366px;top:641px;width:1px;height:20px;background:#cacaca"></div>
<div style="left:445px;top:641px;width:1px;height:20px;background:#cacaca"></div>
<div style="left:524px;top:641px;width:1px;height:20px;background:#cacaca"></div>
<div style="left:603px;top:641px;width:1px;height:20px;background:#cacaca"></div>
<div style="left:682px;top:641px;width:1px;height:20px;background:#cacaca"></div>
<div style="left:761px;top:641px;width:1px;height:20px;background:#cacaca"></div>
<div style="left:840px;top:641px;width:1px;height:20px;background:#cacaca"></div>
<div style="left:919px;top:641px;width:1px;height:20px;background:#cacaca"></div>
<div style="left:998px;top:641px;width:1px;height:20px;background:#cacaca"></div>
<div style="left:1077px;top:641px;width:1px;height:20px;background:#cacaca"></div>
<div style="left:1156px;top:641px;width:1px;height:20px;background:#cacaca"></div>
<div style="left:65px;top:660px;width:1px;height:20px;background:#cacaca"></div>
<div style="left:206px;top:660px;width:1px;height:20px;background:#cacaca"></div>
<div style="left:287px;top:660px;width:1px;height:20px;background:#cacaca"></div>
<div style="left:366px;top:660px;width:1px;height:20px;background:#cacaca"></div>
<div style="left:445px;top:660px;width:1px;height:20px;background:#cacaca"></div>
<div style="left:524px;top:660px;width:1px;height:20px;background:#cacaca"></div>
<div style="left:603px;top:660px;width:1px;height:20px;background:#cacaca"></div>
<div style="left:682px;top:660px;width:1px;height:20px;background:#cacaca"></div>
<div style="left:761px;top:660px;width:1px;height:20px;background:#cacaca"></div>
<div style="left:840px;top:660px;width:1px;height:20px;background:#cacaca"></div>
<div style="left:919px;top:660px;width:1px;height:20px;background:#cacaca"></div>
<div style="left:998px;top:660px;width:1px;height:20px;background:#cacaca"></div>
<div style="left:1077px;top:660px;width:1px;height:20px;background:#cacaca"></div>
<div style="left:1156px;top:660px;width:1px;height:20px;background:#cacaca"></div>
<div style="left:66px;top:185px;width:1091px;height:1px;background:#a9d08e"></div>
<div style="left:1157px;top:185px;width:29px;height:1px;background:#cacaca"></div>
<div style="left:65px;top:185px;width:1px;height:1px;background:#cacaca"></div>
<div style="left:66px;top:204px;width:1091px;height:1px;background:#a9d08e"></div>
<div style="left:1157px;top:204px;width:29px;height:1px;background:#cacaca"></div>
<div style="left:65px;top:204px;width:1px;height:1px;background:#cacaca"></div>
<div style="left:66px;top:223px;width:1091px;height:1px;background:#a9d08e"></div>
<div style="left:1157px;top:223px;width:29px;height:1px;background:#cacaca"></div>
<div style="left:65px;top:223px;width:1px;height:1px;background:#cacaca"></div>
<div style="left:66px;top:242px;width:1091px;height:1px;background:#a9d08e"></div>
<div style="left:1157px;top:242px;width:29px;height:1px;background:#cacaca"></div>
<div style="left:65px;top:242px;width:1px;height:1px;background:#cacaca"></div>
<div style="left:66px;top:261px;width:1091px;height:1px;background:#a9d08e"></div>
<div style="left:1157px;top:261px;width:29px;height:1px;background:#cacaca"></div>
<div style="left:65px;top:261px;width:1px;height:1px;background:#cacaca"></div>
<div style="left:66px;top:280px;width:1091px;height:1px;background:#a9d08e"></div>
<div style="left:1157px;top:280px;width:29px;height:1px;background:#cacaca"></div>
<div style="left:65px;top:280px;width:1px;height:1px;background:#cacaca"></div>
<div style="left:66px;top:299px;width:1091px;height:1px;background:#a9d08e"></div>
<div style="left:1157px;top:299px;width:29px;height:1px;background:#cacaca"></div>
<div style="left:65px;top:299px;width:1px;height:1px;background:#cacaca"></div>
<div style="left:66px;top:318px;width:1091px;height:1px;background:#a9d08e"></div>
<div style="left:1157px;top:318px;width:29px;height:1px;background:#cacaca"></div>
<div style="left:65px;top:318px;width:1px;height:1px;background:#cacaca"></div>
<div style="left:66px;top:337px;width:1091px;height:1px;background:#a9d08e"></div>
<div style="left:1157px;top:337px;width:29px;height:1px;background:#cacaca"></div>
<div style="left:65px;top:337px;width:1px;height:1px;background:#cacaca"></div>
<div style="left:66px;top:356px;width:1091px;height:1px;background:#a9d08e"></div>
<div style="left:1157px;top:356px;width:29px;height:1px;background:#cacaca"></div>
<div style="left:65px;top:356px;width:1px;height:1px;background:#cacaca"></div>
<div style="left:66px;top:375px;width:1091px;height:1px;background:#a9d08e"></div>
<div style="left:1157px;top:375px;width:29px;height:1px;background:#cacaca"></div>
<div style="left:65px;top:375px;width:1px;height:1px;background:#cacaca"></div>
<div style="left:66px;top:394px;width:1091px;height:1px;background:#a9d08e"></div>
<div style="left:1157px;top:394px;width:29px;height:1px;background:#cacaca"></div>
<div style="left:65px;top:394px;width:1px;height:1px;background:#cacaca"></div>
<div style="left:66px;top:413px;width:1091px;height:1px;background:#a9d08e"></div>
<div style="left:1157px;top:413px;width:29px;height:1px;background:#cacaca"></div>
<div style="left:65px;top:413px;width:1px;height:1px;background:#cacaca"></div>
<div style="left:66px;top:432px;width:1091px;height:1px;background:#a9d08e"></div>
<div style="left:1157px;top:432px;width:29px;height:1px;background:#cacaca"></div>
<div style="left:65px;top:432px;width:1px;height:1px;background:#cacaca"></div>
<div style="left:66px;top:451px;width:1091px;height:1px;background:#a9d08e"></div>
<div style="left:1157px;top:451px;width:29px;height:1px;background:#cacaca"></div>
<div style="left:65px;top:451px;width:1px;height:1px;background:#cacaca"></div>
<div style="left:66px;top:470px;width:1091px;height:1px;background:#a9d08e"></div>
<div style="left:1157px;top:470px;width:29px;height:1px;background:#cacaca"></div>
<div style="left:65px;top:470px;width:1px;height:1px;background:#cacaca"></div>
<div style="left:66px;top:489px;width:1091px;height:1px;background:#a9d08e"></div>
<div style="left:1157px;top:489px;width:29px;height:1px;background:#cacaca"></div>
<div style="left:65px;top:489px;width:1px;height:1px;background:#cacaca"></div>
<div style="left:66px;top:507px;width:1091px;height:3px;background:#70ad47"></div>
<div style="left:1157px;top:508px;width:29px;height:1px;background:#cacaca"></div>
<div style="left:65px;top:527px;width:1121px;height:1px;background:#cacaca"></div>
<div style="left:65px;top:546px;width:1121px;height:1px;background:#cacaca"></div>
<div style="left:65px;top:565px;width:1121px;height:1px;background:#cacaca"></div>
<div style="left:65px;top:584px;width:1121px;height:1px;background:#cacaca"></div>
<div style="left:65px;top:603px;width:1121px;height:1px;background:#cacaca"></div>
<div style="left:65px;top:622px;width:1121px;height:1px;background:#cacaca"></div>
<div style="left:65px;top:641px;width:1121px;height:1px;background:#cacaca"></div>
<div style="left:65px;top:660px;width:1121px;height:1px;background:#cacaca"></div>
<div style="left:65px;top:679px;width:1121px;height:1px;background:#cacaca"></div>
<div style="left:1156px;top:167px;width:1px;height:341px;background:#a9d08e"></div>
<div style="left:65px;top:166px;width:1px;height:504px;background:#d8d8d8"></div>
<div class="c" style="left:209px;top:169px;color:#fff;font-weight:bold">Jan</div>
<div style="left:271px;top:168px;width:16px;height:16px;background:#fff;border:1px solid #cfcfcf"></div>
<svg style="left:271px;top:168px" width="16" height="16" viewBox="0 0 16 16"><path d="M4 2 H12 V3 L9 5.4 V12 H7 V5.4 L4 3 Z" fill="#727272"/></svg>
<div class="c" style="left:290px;top:169px;color:#fff;font-weight:bold">Feb</div>
<div style="left:350px;top:168px;width:16px;height:16px;background:#fff;border:1px solid #cfcfcf"></div>
<svg style="left:350px;top:168px" width="16" height="16" viewBox="0 0 16 16"><path d="M4 6 H12 L8 10 Z" fill="#777"/></svg>
<div class="c" style="left:369px;top:169px;color:#fff;font-weight:bold">Mar</div>
<div style="left:429px;top:168px;width:16px;height:16px;background:#fff;border:1px solid #cfcfcf"></div>
<svg style="left:429px;top:168px" width="16" height="16" viewBox="0 0 16 16"><path d="M4 6 H12 L8 10 Z" fill="#777"/></svg>
<div class="c" style="left:448px;top:169px;color:#fff;font-weight:bold">Apr</div>
<div style="left:508px;top:168px;width:16px;height:16px;background:#fff;border:1px solid #cfcfcf"></div>
<svg style="left:508px;top:168px" width="16" height="16" viewBox="0 0 16 16"><path d="M4 6 H12 L8 10 Z" fill="#777"/></svg>
<div class="c" style="left:527px;top:169px;color:#fff;font-weight:bold">May</div>
<div style="left:587px;top:168px;width:16px;height:16px;background:#fff;border:1px solid #cfcfcf"></div>
<svg style="left:587px;top:168px" width="16" height="16" viewBox="0 0 16 16"><path d="M4 6 H12 L8 10 Z" fill="#777"/></svg>
<div class="c" style="left:606px;top:169px;color:#fff;font-weight:bold">Jun</div>
<div style="left:666px;top:168px;width:16px;height:16px;background:#fff;border:1px solid #cfcfcf"></div>
<svg style="left:666px;top:168px" width="16" height="16" viewBox="0 0 16 16"><path d="M4 2 H12 V3 L9 5.4 V12 H7 V5.4 L4 3 Z" fill="#727272"/></svg>
<div class="c" style="left:685px;top:169px;color:#fff;font-weight:bold">Jul</div>
<div style="left:745px;top:168px;width:16px;height:16px;background:#fff;border:1px solid #cfcfcf"></div>
<svg style="left:745px;top:168px" width="16" height="16" viewBox="0 0 16 16"><path d="M4 6 H12 L8 10 Z" fill="#777"/></svg>
<div class="c" style="left:764px;top:169px;color:#fff;font-weight:bold">Aug</div>
<div style="left:824px;top:168px;width:16px;height:16px;background:#fff;border:1px solid #cfcfcf"></div>
<svg style="left:824px;top:168px" width="16" height="16" viewBox="0 0 16 16"><path d="M4 6 H12 L8 10 Z" fill="#777"/></svg>
<div class="c" style="left:843px;top:169px;color:#fff;font-weight:bold">Sep</div>
<div style="left:903px;top:168px;width:16px;height:16px;background:#fff;border:1px solid #cfcfcf"></div>
<svg style="left:903px;top:168px" width="16" height="16" viewBox="0 0 16 16"><path d="M4 6 H12 L8 10 Z" fill="#777"/></svg>
<div class="c" style="left:922px;top:169px;color:#fff;font-weight:bold">Oct</div>
<div style="left:982px;top:168px;width:16px;height:16px;background:#fff;border:1px solid #cfcfcf"></div>
<svg style="left:982px;top:168px" width="16" height="16" viewBox="0 0 16 16"><path d="M4 6 H12 L8 10 Z" fill="#777"/></svg>
<div class="c" style="left:1001px;top:169px;color:#fff;font-weight:bold">Nov</div>
<div style="left:1061px;top:168px;width:16px;height:16px;background:#fff;border:1px solid #cfcfcf"></div>
<svg style="left:1061px;top:168px" width="16" height="16" viewBox="0 0 16 16"><path d="M4 6 H12 L8 10 Z" fill="#777"/></svg>
<div class="c" style="left:1080px;top:169px;color:#fff;font-weight:bold">Dec</div>
<div style="left:1140px;top:168px;width:16px;height:16px;background:#fff;border:1px solid #cfcfcf"></div>
<svg style="left:1140px;top:168px" width="16" height="16" viewBox="0 0 16 16"><path d="M4 6 H12 L8 10 Z" fill="#777"/></svg>
<div class="c" style="left:215px;top:188px">$</div>
<div class="c r" style="left:206px;top:188px;width:75px">2,667.60</div>
<div class="c" style="left:294px;top:188px">$</div>
<div class="c r" style="left:287px;top:188px;width:73px">4,013.10</div>
<div class="c" style="left:373px;top:188px">$</div>
<div class="c r" style="left:366px;top:188px;width:73px">4,836.00</div>
<div class="c" style="left:452px;top:188px">$</div>
<div class="c r" style="left:445px;top:188px;width:73px">6,087.90</div>
<div class="c" style="left:531px;top:188px">$</div>
<div class="c r" style="left:524px;top:188px;width:73px">1,310.40</div>
<div class="c" style="left:610px;top:188px">$</div>
<div class="c r" style="left:603px;top:188px;width:73px">1,368.00</div>
<div class="c" style="left:689px;top:188px">$</div>
<div class="c r" style="left:682px;top:188px;width:73px">1,323.00</div>
<div class="c" style="left:768px;top:188px">$</div>
<div class="c r" style="left:761px;top:188px;width:73px">1,656.00</div>
<div class="c" style="left:847px;top:188px">$</div>
<div class="c r" style="left:840px;top:188px;width:73px">1,768.41</div>
<div class="c" style="left:926px;top:188px">$</div>
<div class="c r" style="left:919px;top:188px;width:73px">1,310.40</div>
<div class="c" style="left:1005px;top:188px">$</div>
<div class="c r" style="left:998px;top:188px;width:73px">1,398.40</div>
<div class="c" style="left:1084px;top:188px">$</div>
<div class="c r" style="left:1077px;top:188px;width:73px">4,496.50</div>
<div class="c" style="left:215px;top:207px">$</div>
<div class="c r" style="left:206px;top:207px;width:75px">1,768.41</div>
<div class="c" style="left:294px;top:207px">$</div>
<div class="c r" style="left:287px;top:207px;width:73px">1,978.00</div>
<div class="c" style="left:373px;top:207px">$</div>
<div class="c r" style="left:366px;top:207px;width:73px">4,412.32</div>
<div class="c" style="left:452px;top:207px">$</div>
<div class="c r" style="left:445px;top:207px;width:73px">1,656.00</div>
<div class="c" style="left:531px;top:207px">$</div>
<div class="c r" style="left:524px;top:207px;width:73px">3,202.87</div>
<div class="c" style="left:612px;top:207px">$</div>
<div class="c r" style="left:603px;top:207px;width:73px">263.40</div>
<div class="c" style="left:691px;top:207px">$</div>
<div class="c r" style="left:682px;top:207px;width:73px">842.88</div>
<div class="c" style="left:768px;top:207px">$</div>
<div class="c r" style="left:761px;top:207px;width:73px">3,060.00</div>
<div class="c" style="left:847px;top:207px">$</div>
<div class="c r" style="left:840px;top:207px;width:73px">3,182.40</div>
<div class="c" style="left:926px;top:207px">$</div>
<div class="c r" style="left:919px;top:207px;width:73px">3,202.87</div>
<div class="c" style="left:1005px;top:207px">$</div>
<div class="c r" style="left:998px;top:207px;width:73px">1,347.36</div>
<div class="c" style="left:1084px;top:207px">$</div>
<div class="c r" style="left:1077px;top:207px;width:73px">2,750.69</div>
<div class="c" style="left:215px;top:226px">$</div>
<div class="c r" style="left:206px;top:226px;width:75px">1,398.40</div>
<div class="c" style="left:294px;top:226px">$</div>
<div class="c r" style="left:287px;top:226px;width:73px">4,496.50</div>
<div class="c" style="left:373px;top:226px">$</div>
<div class="c r" style="left:366px;top:226px;width:73px">1,196.00</div>
<div class="c" style="left:452px;top:226px">$</div>
<div class="c r" style="left:445px;top:226px;width:73px">3,979.00</div>
<div class="c" style="left:531px;top:226px">$</div>
<div class="c r" style="left:524px;top:226px;width:73px">1,978.00</div>
<div class="c" style="left:610px;top:226px">$</div>
<div class="c r" style="left:603px;top:226px;width:73px">1,656.00</div>
<div class="c" style="left:689px;top:226px">$</div>
<div class="c r" style="left:682px;top:226px;width:73px">1,768.41</div>
<div class="c" style="left:768px;top:226px">$</div>
<div class="c r" style="left:761px;top:226px;width:73px">3,899.51</div>
<div class="c" style="left:847px;top:226px">$</div>
<div class="c r" style="left:840px;top:226px;width:73px">1,347.36</div>
<div class="c" style="left:926px;top:226px">$</div>
<div class="c r" style="left:919px;top:226px;width:73px">1,978.00</div>
<div class="c" style="left:1005px;top:226px">$</div>
<div class="c r" style="left:998px;top:226px;width:73px">1,390.00</div>
<div class="c" style="left:1084px;top:226px">$</div>
<div class="c r" style="left:1077px;top:226px;width:73px">4,488.20</div>
<div class="c" style="left:68px;top:245px">Loisiana sauce</div>
<div class="c" style="left:215px;top:245px">$</div>
<div class="c r" style="left:206px;top:245px;width:75px">1,347.36</div>
<div class="c" style="left:294px;top:245px">$</div>
<div class="c r" style="left:287px;top:245px;width:73px">2,750.69</div>
<div class="c" style="left:373px;top:245px">$</div>
<div class="c r" style="left:366px;top:245px;width:73px">1,375.62</div>
<div class="c" style="left:452px;top:245px">$</div>
<div class="c r" style="left:445px;top:245px;width:73px">3,899.51</div>
<div class="c" style="left:531px;top:245px">$</div>
<div class="c r" style="left:524px;top:245px;width:73px">4,683.50</div>
<div class="c" style="left:610px;top:245px">$</div>
<div class="c r" style="left:603px;top:245px;width:73px">3,060.00</div>
<div class="c" style="left:689px;top:245px">$</div>
<div class="c r" style="left:682px;top:245px;width:73px">3,182.40</div>
<div class="c" style="left:768px;top:245px">$</div>
<div class="c r" style="left:761px;top:245px;width:73px">2,850.00</div>
<div class="c" style="left:847px;top:245px">$</div>
<div class="c r" style="left:840px;top:245px;width:73px">1,509.60</div>
<div class="c" style="left:926px;top:245px">$</div>
<div class="c r" style="left:919px;top:245px;width:73px">4,683.50</div>
<div class="c" style="left:1005px;top:245px">$</div>
<div class="c r" style="left:998px;top:245px;width:73px">1,462.00</div>
<div class="c" style="left:1086px;top:245px">$</div>
<div class="c r" style="left:1077px;top:245px;width:73px">644.00</div>
<div class="c" style="left:68px;top:264px">Marinated pepper</div>
<div class="c" style="left:215px;top:264px">$</div>
<div class="c r" style="left:206px;top:264px;width:75px">1,509.60</div>
<div class="c" style="left:296px;top:264px">$</div>
<div class="c r" style="left:287px;top:264px;width:73px">530.40</div>
<div class="c" style="left:373px;top:264px">$</div>
<div class="c r" style="left:366px;top:264px;width:73px">68.00</div>
<div class="c" style="left:454px;top:264px">$</div>
<div class="c r" style="left:445px;top:264px;width:73px">850.00</div>
<div class="c" style="left:531px;top:264px">$</div>
<div class="c r" style="left:524px;top:264px;width:73px">4,496.50</div>
<div class="c" style="left:610px;top:264px">$</div>
<div class="c r" style="left:603px;top:264px;width:73px">3,979.00</div>
<div class="c" style="left:689px;top:264px">$</div>
<div class="c r" style="left:682px;top:264px;width:73px">1,398.40</div>
<div class="c" style="left:768px;top:264px">$</div>
<div class="c r" style="left:761px;top:264px;width:73px">2,697.00</div>
<div class="c" style="left:847px;top:264px">$</div>
<div class="c r" style="left:840px;top:264px;width:73px">1,390.00</div>
<div class="c" style="left:926px;top:264px">$</div>
<div class="c r" style="left:919px;top:264px;width:73px">4,496.50</div>
<div class="c" style="left:1005px;top:264px">$</div>
<div class="c r" style="left:998px;top:264px;width:73px">1,310.40</div>
<div class="c" style="left:1084px;top:264px">$</div>
<div class="c r" style="left:1077px;top:264px;width:73px">1,368.00</div>
<div class="c" style="left:68px;top:283px">Mozzarella</div>
<div class="c" style="left:215px;top:283px">$</div>
<div class="c r" style="left:206px;top:283px;width:75px">1,390.00</div>
<div class="c" style="left:294px;top:283px">$</div>
<div class="c r" style="left:287px;top:283px;width:73px">4,488.20</div>
<div class="c" style="left:373px;top:283px">$</div>
<div class="c r" style="left:366px;top:283px;width:73px">3,027.60</div>
<div class="c" style="left:452px;top:283px">$</div>
<div class="c r" style="left:445px;top:283px;width:73px">2,697.00</div>
<div class="c" style="left:531px;top:283px">$</div>
<div class="c r" style="left:524px;top:283px;width:73px">2,750.69</div>
<div class="c" style="left:610px;top:283px">$</div>
<div class="c r" style="left:603px;top:283px;width:73px">3,899.51</div>
<div class="c" style="left:689px;top:283px">$</div>
<div class="c r" style="left:682px;top:283px;width:73px">1,347.36</div>
<div class="c" style="left:768px;top:283px">$</div>
<div class="c r" style="left:761px;top:283px;width:73px">1,434.00</div>
<div class="c" style="left:847px;top:283px">$</div>
<div class="c r" style="left:840px;top:283px;width:73px">1,462.00</div>
<div class="c" style="left:926px;top:283px">$</div>
<div class="c r" style="left:919px;top:283px;width:73px">2,750.69</div>
<div class="c" style="left:1005px;top:283px">$</div>
<div class="c r" style="left:998px;top:283px;width:73px">3,202.87</div>
<div class="c" style="left:1086px;top:283px">$</div>
<div class="c r" style="left:1077px;top:283px;width:73px">263.40</div>
<div class="c" style="left:68px;top:302px">Lavash</div>
<div class="c" style="left:215px;top:302px">$</div>
<div class="c r" style="left:206px;top:302px;width:75px">1,462.00</div>
<div class="c" style="left:296px;top:302px">$</div>
<div class="c r" style="left:287px;top:302px;width:73px">644.00</div>
<div class="c" style="left:373px;top:302px">$</div>
<div class="c r" style="left:366px;top:302px;width:73px">1,733.00</div>
<div class="c" style="left:452px;top:302px">$</div>
<div class="c r" style="left:445px;top:302px;width:73px">1,434.00</div>
<div class="c" style="left:531px;top:302px">$</div>
<div class="c r" style="left:524px;top:302px;width:73px">1,530.40</div>
<div class="c" style="left:610px;top:302px">$</div>
<div class="c r" style="left:603px;top:302px;width:73px">2,850.00</div>
<div class="c" style="left:689px;top:302px">$</div>
<div class="c r" style="left:682px;top:302px;width:73px">1,509.60</div>
<div class="c" style="left:768px;top:302px">$</div>
<div class="c r" style="left:761px;top:302px;width:73px">1,273.50</div>
<div class="c" style="left:847px;top:302px">$</div>
<div class="c r" style="left:840px;top:302px;width:73px">1,310.40</div>
<div class="c" style="left:928px;top:302px">$</div>
<div class="c r" style="left:919px;top:302px;width:73px">630.40</div>
<div class="c" style="left:1005px;top:302px">$</div>
<div class="c r" style="left:998px;top:302px;width:73px">4,013.10</div>
<div class="c" style="left:1084px;top:302px">$</div>
<div class="c r" style="left:1077px;top:302px;width:73px">6,087.90</div>
<div class="c" style="left:68px;top:321px">Scotch whisky</div>
<div class="c" style="left:215px;top:321px">$</div>
<div class="c r" style="left:206px;top:321px;width:75px">1,310.40</div>
<div class="c" style="left:294px;top:321px">$</div>
<div class="c r" style="left:287px;top:321px;width:73px">1,368.00</div>
<div class="c" style="left:373px;top:321px">$</div>
<div class="c r" style="left:366px;top:321px;width:73px">1,323.00</div>
<div class="c" style="left:452px;top:321px">$</div>
<div class="c r" style="left:445px;top:321px;width:73px">1,273.50</div>
<div class="c" style="left:531px;top:321px">$</div>
<div class="c r" style="left:524px;top:321px;width:73px">4,488.20</div>
<div class="c" style="left:610px;top:321px">$</div>
<div class="c r" style="left:603px;top:321px;width:73px">2,697.00</div>
<div class="c" style="left:689px;top:321px">$</div>
<div class="c r" style="left:682px;top:321px;width:73px">1,390.00</div>
<div class="c" style="left:768px;top:321px">$</div>
<div class="c r" style="left:761px;top:321px;width:73px">2,590.10</div>
<div class="c" style="left:847px;top:321px">$</div>
<div class="c r" style="left:840px;top:321px;width:73px">3,202.87</div>
<div class="c" style="left:926px;top:321px">$</div>
<div class="c r" style="left:919px;top:321px;width:73px">3,060.00</div>
<div class="c" style="left:1005px;top:321px">$</div>
<div class="c r" style="left:998px;top:321px;width:73px">1,978.00</div>
<div class="c" style="left:1084px;top:321px">$</div>
<div class="c r" style="left:1077px;top:321px;width:73px">1,656.00</div>
<div class="c" style="left:68px;top:340px">Cherry jam</div>
<div class="c" style="left:215px;top:340px">$</div>
<div class="c r" style="left:206px;top:340px;width:75px">3,202.87</div>
<div class="c" style="left:296px;top:340px">$</div>
<div class="c r" style="left:287px;top:340px;width:73px">263.40</div>
<div class="c" style="left:375px;top:340px">$</div>
<div class="c r" style="left:366px;top:340px;width:73px">842.88</div>
<div class="c" style="left:452px;top:340px">$</div>
<div class="c r" style="left:445px;top:340px;width:73px">2,590.10</div>
<div class="c" style="left:533px;top:340px">$</div>
<div class="c r" style="left:524px;top:340px;width:73px">644.00</div>
<div class="c" style="left:610px;top:340px">$</div>
<div class="c r" style="left:603px;top:340px;width:73px">1,434.00</div>
<div class="c" style="left:689px;top:340px">$</div>
<div class="c r" style="left:682px;top:340px;width:73px">1,462.00</div>
<div class="c" style="left:768px;top:340px">$</div>
<div class="c r" style="left:761px;top:340px;width:73px">3,202.87</div>
<div class="c" style="left:849px;top:340px">$</div>
<div class="c r" style="left:840px;top:340px;width:73px">263.40</div>
<div class="c" style="left:928px;top:340px">$</div>
<div class="c r" style="left:919px;top:340px;width:73px">842.88</div>
<div class="c" style="left:1005px;top:340px">$</div>
<div class="c r" style="left:998px;top:340px;width:73px">2,590.10</div>
<div class="c" style="left:1084px;top:340px">$</div>
<div class="c r" style="left:1077px;top:340px;width:73px">1,462.00</div>
<div class="c" style="left:68px;top:359px">Chocolate milk</div>
<div class="c" style="left:215px;top:359px">$</div>
<div class="c r" style="left:206px;top:359px;width:75px">4,013.10</div>
<div class="c" style="left:294px;top:359px">$</div>
<div class="c r" style="left:287px;top:359px;width:73px">6,087.90</div>
<div class="c" style="left:373px;top:359px">$</div>
<div class="c r" style="left:366px;top:359px;width:73px">2,667.60</div>
<div class="c" style="left:452px;top:359px">$</div>
<div class="c r" style="left:445px;top:359px;width:73px">1,462.00</div>
<div class="c" style="left:531px;top:359px">$</div>
<div class="c r" style="left:524px;top:359px;width:73px">1,347.36</div>
<div class="c" style="left:610px;top:359px">$</div>
<div class="c r" style="left:603px;top:359px;width:73px">2,750.69</div>
<div class="c" style="left:689px;top:359px">$</div>
<div class="c r" style="left:682px;top:359px;width:73px">1,375.62</div>
<div class="c" style="left:768px;top:359px">$</div>
<div class="c r" style="left:761px;top:359px;width:73px">3,899.51</div>
<div class="c" style="left:847px;top:359px">$</div>
<div class="c r" style="left:840px;top:359px;width:73px">3,202.87</div>
<div class="c" style="left:928px;top:359px">$</div>
<div class="c r" style="left:919px;top:359px;width:73px">263.40</div>
<div class="c" style="left:1007px;top:359px">$</div>
<div class="c r" style="left:998px;top:359px;width:73px">842.88</div>
<div class="c" style="left:1084px;top:359px">$</div>
<div class="c r" style="left:1077px;top:359px;width:73px">2,590.10</div>
<div class="c" style="left:68px;top:378px">Tomatoes</div>
<div class="c" style="left:215px;top:378px">$</div>
<div class="c r" style="left:206px;top:378px;width:75px">1,978.00</div>
<div class="c" style="left:294px;top:378px">$</div>
<div class="c r" style="left:287px;top:378px;width:73px">1,656.00</div>
<div class="c" style="left:373px;top:378px">$</div>
<div class="c r" style="left:366px;top:378px;width:73px">1,768.41</div>
<div class="c" style="left:452px;top:378px">$</div>
<div class="c r" style="left:445px;top:378px;width:73px">1,310.40</div>
<div class="c" style="left:531px;top:378px">$</div>
<div class="c r" style="left:524px;top:378px;width:73px">1,509.60</div>
<div class="c" style="left:612px;top:378px">$</div>
<div class="c r" style="left:603px;top:378px;width:73px">530.40</div>
<div class="c" style="left:689px;top:378px">$</div>
<div class="c r" style="left:682px;top:378px;width:73px">68.00</div>
<div class="c" style="left:770px;top:378px">$</div>
<div class="c r" style="left:761px;top:378px;width:73px">850.00</div>
<div class="c" style="left:847px;top:378px">$</div>
<div class="c r" style="left:840px;top:378px;width:73px">4,013.10</div>
<div class="c" style="left:926px;top:378px">$</div>
<div class="c r" style="left:919px;top:378px;width:73px">6,087.90</div>
<div class="c" style="left:1005px;top:378px">$</div>
<div class="c r" style="left:998px;top:378px;width:73px">2,667.60</div>
<div class="c" style="left:1084px;top:378px">$</div>
<div class="c r" style="left:1077px;top:378px;width:73px">1,462.00</div>
<div class="c" style="left:68px;top:397px">Grape juice</div>
<div class="c" style="left:215px;top:397px">$</div>
<div class="c r" style="left:206px;top:397px;width:75px">4,496.50</div>
<div class="c" style="left:294px;top:397px">$</div>
<div class="c r" style="left:287px;top:397px;width:73px">3,979.00</div>
<div class="c" style="left:373px;top:397px">$</div>
<div class="c r" style="left:366px;top:397px;width:73px">1,398.40</div>
<div class="c" style="left:452px;top:397px">$</div>
<div class="c r" style="left:445px;top:397px;width:73px">4,013.10</div>
<div class="c" style="left:531px;top:397px">$</div>
<div class="c r" style="left:524px;top:397px;width:73px">1,462.00</div>
<div class="c" style="left:612px;top:397px">$</div>
<div class="c r" style="left:603px;top:397px;width:73px">644.00</div>
<div class="c" style="left:689px;top:397px">$</div>
<div class="c r" style="left:682px;top:397px;width:73px">1,733.00</div>
<div class="c" style="left:768px;top:397px">$</div>
<div class="c r" style="left:761px;top:397px;width:73px">1,434.00</div>
<div class="c" style="left:847px;top:397px">$</div>
<div class="c r" style="left:840px;top:397px;width:73px">4,683.50</div>
<div class="c" style="left:926px;top:397px">$</div>
<div class="c r" style="left:919px;top:397px;width:73px">3,060.00</div>
<div class="c" style="left:1005px;top:397px">$</div>
<div class="c r" style="left:998px;top:397px;width:73px">3,182.40</div>
<div class="c" style="left:1084px;top:397px">$</div>
<div class="c r" style="left:1077px;top:397px;width:73px">3,202.87</div>
<div class="c" style="left:68px;top:416px">Chicken meat</div>
<div class="c" style="left:215px;top:416px">$</div>
<div class="c r" style="left:206px;top:416px;width:75px">2,750.69</div>
<div class="c" style="left:294px;top:416px">$</div>
<div class="c r" style="left:287px;top:416px;width:73px">3,899.51</div>
<div class="c" style="left:373px;top:416px">$</div>
<div class="c r" style="left:366px;top:416px;width:73px">1,347.36</div>
<div class="c" style="left:452px;top:416px">$</div>
<div class="c r" style="left:445px;top:416px;width:73px">1,978.00</div>
<div class="c" style="left:531px;top:416px">$</div>
<div class="c r" style="left:524px;top:416px;width:73px">3,899.51</div>
<div class="c" style="left:610px;top:416px">$</div>
<div class="c r" style="left:603px;top:416px;width:73px">1,347.36</div>
<div class="c" style="left:689px;top:416px">$</div>
<div class="c r" style="left:682px;top:416px;width:73px">1,434.00</div>
<div class="c" style="left:768px;top:416px">$</div>
<div class="c r" style="left:761px;top:416px;width:73px">1,462.00</div>
<div class="c" style="left:847px;top:416px">$</div>
<div class="c r" style="left:840px;top:416px;width:73px">4,496.50</div>
<div class="c" style="left:926px;top:416px">$</div>
<div class="c r" style="left:919px;top:416px;width:73px">3,979.00</div>
<div class="c" style="left:1005px;top:416px">$</div>
<div class="c r" style="left:998px;top:416px;width:73px">1,398.40</div>
<div class="c" style="left:1084px;top:416px">$</div>
<div class="c r" style="left:1077px;top:416px;width:73px">4,013.10</div>
<div class="c" style="left:68px;top:435px">Pork steaks</div>
<div class="c" style="left:215px;top:435px">$</div>
<div class="c r" style="left:206px;top:435px;width:75px">1,530.40</div>
<div class="c" style="left:294px;top:435px">$</div>
<div class="c r" style="left:287px;top:435px;width:73px">2,850.00</div>
<div class="c" style="left:373px;top:435px">$</div>
<div class="c r" style="left:366px;top:435px;width:73px">1,509.60</div>
<div class="c" style="left:452px;top:435px">$</div>
<div class="c r" style="left:445px;top:435px;width:73px">4,683.50</div>
<div class="c" style="left:531px;top:435px">$</div>
<div class="c r" style="left:524px;top:435px;width:73px">4,496.50</div>
<div class="c" style="left:610px;top:435px">$</div>
<div class="c r" style="left:603px;top:435px;width:73px">1,196.00</div>
<div class="c" style="left:689px;top:435px">$</div>
<div class="c r" style="left:682px;top:435px;width:73px">3,979.00</div>
<div class="c" style="left:768px;top:435px">$</div>
<div class="c r" style="left:761px;top:435px;width:73px">1,978.00</div>
<div class="c" style="left:847px;top:435px">$</div>
<div class="c r" style="left:840px;top:435px;width:73px">1,368.00</div>
<div class="c" style="left:926px;top:435px">$</div>
<div class="c r" style="left:919px;top:435px;width:73px">1,323.00</div>
<div class="c" style="left:1005px;top:435px">$</div>
<div class="c r" style="left:998px;top:435px;width:73px">1,273.50</div>
<div class="c" style="left:1084px;top:435px">$</div>
<div class="c r" style="left:1077px;top:435px;width:73px">4,488.20</div>
<div class="c" style="left:68px;top:454px">Chocolate ice cream</div>
<div class="c" style="left:215px;top:454px">$</div>
<div class="c r" style="left:206px;top:454px;width:75px">4,488.20</div>
<div class="c" style="left:294px;top:454px">$</div>
<div class="c r" style="left:287px;top:454px;width:73px">2,697.00</div>
<div class="c" style="left:373px;top:454px">$</div>
<div class="c r" style="left:366px;top:454px;width:73px">1,390.00</div>
<div class="c" style="left:452px;top:454px">$</div>
<div class="c r" style="left:445px;top:454px;width:73px">4,496.50</div>
<div class="c" style="left:531px;top:454px">$</div>
<div class="c r" style="left:524px;top:454px;width:73px">2,750.69</div>
<div class="c" style="left:610px;top:454px">$</div>
<div class="c r" style="left:603px;top:454px;width:73px">1,375.62</div>
<div class="c" style="left:689px;top:454px">$</div>
<div class="c r" style="left:682px;top:454px;width:73px">3,899.51</div>
<div class="c" style="left:768px;top:454px">$</div>
<div class="c r" style="left:761px;top:454px;width:73px">4,683.50</div>
<div class="c" style="left:849px;top:454px">$</div>
<div class="c r" style="left:840px;top:454px;width:73px">263.40</div>
<div class="c" style="left:928px;top:454px">$</div>
<div class="c r" style="left:919px;top:454px;width:73px">842.88</div>
<div class="c" style="left:1005px;top:454px">$</div>
<div class="c r" style="left:998px;top:454px;width:73px">2,590.10</div>
<div class="c" style="left:1086px;top:454px">$</div>
<div class="c r" style="left:1077px;top:454px;width:73px">644.00</div>
<div class="c" style="left:68px;top:473px">Pepperoni pizza</div>
<div class="c" style="left:215px;top:473px">$</div>
<div class="c r" style="left:206px;top:473px;width:75px">1,368.00</div>
<div class="c" style="left:294px;top:473px">$</div>
<div class="c r" style="left:287px;top:473px;width:73px">1,273.50</div>
<div class="c" style="left:373px;top:473px">$</div>
<div class="c r" style="left:366px;top:473px;width:73px">1,310.40</div>
<div class="c" style="left:454px;top:473px">$</div>
<div class="c r" style="left:445px;top:473px;width:73px">630.40</div>
<div class="c" style="left:531px;top:473px">$</div>
<div class="c r" style="left:524px;top:473px;width:73px">4,488.20</div>
<div class="c" style="left:610px;top:473px">$</div>
<div class="c r" style="left:603px;top:473px;width:73px">3,027.60</div>
<div class="c" style="left:689px;top:473px">$</div>
<div class="c r" style="left:682px;top:473px;width:73px">2,697.00</div>
<div class="c" style="left:768px;top:473px">$</div>
<div class="c r" style="left:761px;top:473px;width:73px">2,750.69</div>
<div class="c" style="left:847px;top:473px">$</div>
<div class="c r" style="left:840px;top:473px;width:73px">1,530.40</div>
<div class="c" style="left:926px;top:473px">$</div>
<div class="c r" style="left:919px;top:473px;width:73px">2,850.00</div>
<div class="c" style="left:1005px;top:473px">$</div>
<div class="c r" style="left:998px;top:473px;width:73px">1,509.60</div>
<div class="c" style="left:1084px;top:473px">$</div>
<div class="c r" style="left:1077px;top:473px;width:73px">4,683.50</div>
<div class="c" style="left:68px;top:492px">White potatoes</div>
<div class="c" style="left:214px;top:492px">$</div>
<div class="c r" style="left:206px;top:492px;width:75px">850.00</div>
<div class="c" style="left:294px;top:492px">$</div>
<div class="c r" style="left:287px;top:492px;width:73px">4,496.50</div>
<div class="c" style="left:373px;top:492px">$</div>
<div class="c r" style="left:366px;top:492px;width:73px">3,979.00</div>
<div class="c" style="left:452px;top:492px">$</div>
<div class="c r" style="left:445px;top:492px;width:73px">1,398.40</div>
<div class="c" style="left:531px;top:492px">$</div>
<div class="c r" style="left:524px;top:492px;width:73px">2,697.00</div>
<div class="c" style="left:610px;top:492px">$</div>
<div class="c r" style="left:603px;top:492px;width:73px">1,390.00</div>
<div class="c" style="left:689px;top:492px">$</div>
<div class="c r" style="left:682px;top:492px;width:73px">3,899.51</div>
<div class="c" style="left:768px;top:492px">$</div>
<div class="c r" style="left:761px;top:492px;width:73px">1,347.36</div>
<div class="c" style="left:847px;top:492px">$</div>
<div class="c r" style="left:840px;top:492px;width:73px">1,978.00</div>
<div class="c" style="left:926px;top:492px">$</div>
<div class="c r" style="left:919px;top:492px;width:73px">3,899.51</div>
<div class="c" style="left:1005px;top:492px">$</div>
<div class="c r" style="left:998px;top:492px;width:73px">1,347.36</div>
<div class="c" style="left:1084px;top:492px">$</div>
<div class="c r" style="left:1077px;top:492px;width:73px">1,462.00</div>
<div class="c" style="left:68px;top:511px;font-weight:bold">Summary</div>
<div class="c r" style="left:206px;top:511px;width:75px;font-weight:bold">$37,531.53</div>
<div class="c r" style="left:287px;top:511px;width:73px;font-weight:bold">$47,471.70</div>
<div class="c r" style="left:366px;top:511px;width:73px;font-weight:bold">$34,185.19</div>
<div class="c r" style="left:445px;top:511px;width:73px;font-weight:bold">$44,439.31</div>
<div class="c r" style="left:524px;top:511px;width:73px;font-weight:bold">$47,735.42</div>
<div class="c r" style="left:603px;top:511px;width:73px;font-weight:bold">$33,468.58</div>
<div class="c r" style="left:682px;top:511px;width:73px;font-weight:bold">$33,309.69</div>
<div class="c r" style="left:761px;top:511px;width:73px;font-weight:bold">$41,068.04</div>
<div class="c r" style="left:840px;top:511px;width:73px;font-weight:bold">$36,972.21</div>
<div class="c r" style="left:919px;top:511px;width:73px;font-weight:bold">$45,260.93</div>
<div class="c r" style="left:998px;top:511px;width:73px;font-weight:bold">$33,504.07</div>
<div class="c r" style="left:1077px;top:511px;width:73px;font-weight:bold">$45,762.46</div>
<svg style="left:1152px;top:523px" width="4" height="4" viewBox="0 0 4 4"><path d="M0 4 L0 2 L2 2 L2 0 L4 0 L4 4 Z" fill="#3a57b8"/></svg>
<div style="left:1186px;top:148px;width:14px;height:537px;background:#f1f1f1"></div>
<div style="left:1186px;top:149px;width:13px;height:13px;border:1px solid #cfcfcf;background:#f1f1f1"></div>
<svg style="left:1186px;top:149px" width="13" height="13" viewBox="0 0 13 13"><path d="M3 7.8 H10 L6.5 4 Z" fill="#adadad"/></svg>
<div style="left:1186px;top:163px;width:13px;height:34px;border:1px solid #cfcfcf;background:#f1f1f1"></div>
<svg style="left:1186px;top:163px" width="13" height="34" viewBox="0 0 13 34" stroke="#c4c4c4" stroke-width="1"><path d="M4 11.5 H9 M4 13.5 H9 M4 15.5 H9 M4 17.5 H9 M4 19.5 H9 M4 21.5 H9 M4 23.5 H9"/></svg>
<div style="left:1186px;top:656px;width:13px;height:13px;border:1px solid #cfcfcf;background:#f1f1f1"></div>
<svg style="left:1186px;top:656px" width="13" height="13" viewBox="0 0 13 13"><path d="M3 4.5 H10 L6.5 8.3 Z" fill="#adadad"/></svg>
<div style="left:40px;top:670px;width:1146px;height:15px;background:#f1f1f1"></div>
<div style="left:41px;top:670px;width:13px;height:13px;border:1px solid #cfcfcf;background:#f1f1f1"></div>
<svg style="left:41px;top:670px" width="13" height="13" viewBox="0 0 13 13"><path d="M4.5 6.5 L8.5 3 V10 Z" fill="#adadad"/></svg>
<div style="left:55px;top:670px;width:1116px;height:13px;border:1px solid #cfcfcf;background:#f1f1f1"></div>
<svg style="left:603px;top:670px" width="20" height="13" viewBox="0 0 20 13" stroke="#c8c8c8" stroke-width="1"><path d="M4.5 3.5 V8.5 M6.5 3.5 V8.5 M8.5 3.5 V8.5 M10.5 3.5 V8.5 M12.5 3.5 V8.5 M14.5 3.5 V8.5"/></svg>
<div style="left:1172px;top:670px;width:13px;height:13px;border:1px solid #cfcfcf;background:#f1f1f1"></div>
<svg style="left:1172px;top:670px" width="13" height="13" viewBox="0 0 13 13"><path d="M8.5 6.5 L4.5 3 V10 Z" fill="#adadad"/></svg>
<div style="left:0;top:684px;width:1240px;height:1px;background:#cbcbcb"></div>
<div style="left:0;top:685px;width:1240px;height:23px;background:#f1f1f1"></div>
<svg style="left:16px;top:691px" width="82" height="12" viewBox="0 0 82 12" fill="#a8a8a8">
<rect x="1" y="0.5" width="1.2" height="11"/><path d="M3.2 6 L10.2 0.8 V11.2 Z"/>
<path d="M25 6 L32.5 0.8 V11.2 Z"/><path d="M56.5 6 L49 0.8 V11.2 Z"/>
<path d="M78 6 L70.5 0.8 V11.2 Z"/><rect x="79.3" y="0.5" width="1.2" height="11"/></svg>
<div style="left:114px;top:685px;width:1px;height:23px;background:#cbcbcb"></div>
<svg style="left:127px;top:691px" width="13" height="13" viewBox="0 0 13 13" stroke="#444" stroke-width="1.2"><path d="M0.5 6.5 H12.5 M6.5 0.5 V12.5"/></svg>
<div style="left:151px;top:685px;width:1px;height:23px;background:#cbcbcb"></div>
<div style="left:152px;top:685px;width:95px;height:4px;background:#00b050"></div>
<div class="l" style="left:165px;top:691px;color:#888;font-size:11px">Basic features</div>
<div style="left:247px;top:685px;width:1px;height:23px;background:#cbcbcb"></div>
<div style="left:248px;top:685px;width:119px;height:4px;background:#00612e"></div>
<div class="l" style="left:262px;top:691px;color:#888">Advanced features</div>
<div style="left:367px;top:685px;width:1px;height:23px;background:#cbcbcb"></div>
<div style="left:368px;top:689px;width:71px;height:19px;background:#fff"></div>
<div style="left:368px;top:685px;width:71px;height:4px;background:#44845c"></div>
<svg style="left:372px;top:692px" width="16" height="10" viewBox="0 0 16 10" fill="none" stroke="#555" stroke-width="0.9">
<path d="M1.2 5 C4.5 0.6 11.5 0.6 14.8 5 C11.5 9.4 4.5 9.4 1.2 5 Z"/><circle cx="8" cy="5" r="1.9" fill="#444" stroke="none"/></svg>
<div class="l" style="left:394px;top:691px;color:#000;font-weight:bold;font-size:11px;letter-spacing:-0.25px">Sheet1</div>
<div style="left:439px;top:685px;width:1px;height:23px;background:#cbcbcb"></div>
<div style="left:932px;top:685px;width:1px;height:23px;background:#cbcbcb"></div>
<div class="l" style="left:949px;top:691px">17 of 21 records filtered</div>
<div style="left:1078px;top:685px;width:1px;height:23px;background:#cbcbcb"></div>
<div style="left:1097px;top:697px;width:11px;height:1px;background:#444"></div>
<div class="l" style="left:1124px;top:691px;font-weight:bold">Zoom 100%</div>
<svg style="left:1202px;top:691px" width="13" height="13" viewBox="0 0 13 13" stroke="#444" stroke-width="1.2"><path d="M0.5 6.5 H12.5 M6.5 0.5 V12.5"/></svg>
<div style="left:58px;top:115px;width:161px;height:125px;background:#fff;border:1px solid #cfcfcf;border-radius:3px;box-shadow:0 3px 7px rgba(0,0,0,0.22)"></div>
<div class="l" style="left:78px;top:126px">Default</div>
<div class="l" style="left:78px;top:151px">Sorted Data</div>
<div class="l" style="left:78px;top:176px">Filtered Data</div>
<svg style="left:65px;top:178px" width="10" height="9" viewBox="0 0 10 9" fill="none" stroke="#444" stroke-width="1.6"><path d="M0.8 4.5 L3.5 7.5 L9 1"/></svg>
<div style="left:59px;top:202px;width:159px;height:1px;background:#e4e4e4"></div>
<div class="l" style="left:78px;top:215px">View manager</div>
</body></html>
